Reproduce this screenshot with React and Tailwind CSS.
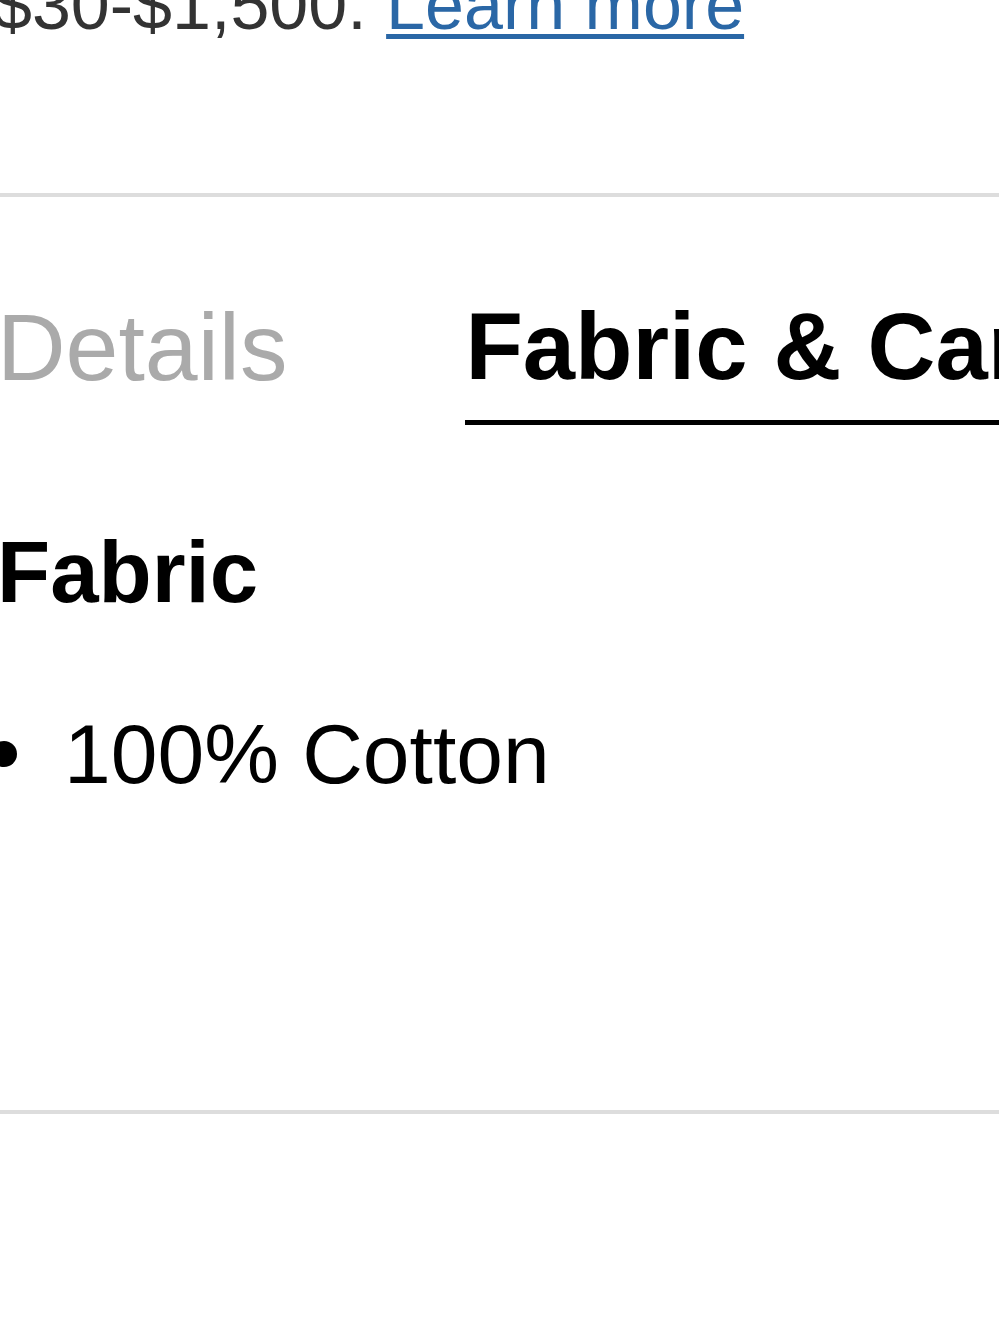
const App = () => {
  return (
    <div className="min-h-[1333px] w-[999px] overflow-hidden bg-white font-['Liberation_Sans',Arial,sans-serif]">
      <div className="-ml-[7px] -mt-[35px]">
        <p className="whitespace-nowrap text-[70px] leading-[80px] text-[#333]">
          $30-$1,500.{" "}
          <a
            href="#"
            className="text-[#2a67a6] underline decoration-[5px] underline-offset-[5px]"
          >
            Learn more
          </a>
        </p>
      </div>

      <div className="mt-[148px] h-[4px] w-full bg-[#dddddd]"></div>

      <div className="-ml-[3px] mt-[103px] flex items-start gap-[178px] whitespace-nowrap">
        <div className="text-[95px] leading-none text-[#aaaaaa]">Details</div>
        <div className="border-b-[5px] border-black pb-[26px] text-[94px] font-bold leading-none text-black">
          Fabric &amp; Care
        </div>
      </div>

      <div className="-ml-[3px] mt-[103px]">
        <h3 className="text-[87px] font-bold leading-none text-black">Fabric</h3>
        <div className="mt-[97px] flex items-center whitespace-nowrap">
          <span className="-ml-[6px] block h-[26px] w-[26px] rounded-full bg-black"></span>
          <span className="ml-[47px] text-[84px] leading-none text-black">100% Cotton</span>
        </div>
      </div>

      <div className="mt-[314px] h-[4px] w-full bg-[#dddddd]"></div>
    </div>
  )
}

export default App
